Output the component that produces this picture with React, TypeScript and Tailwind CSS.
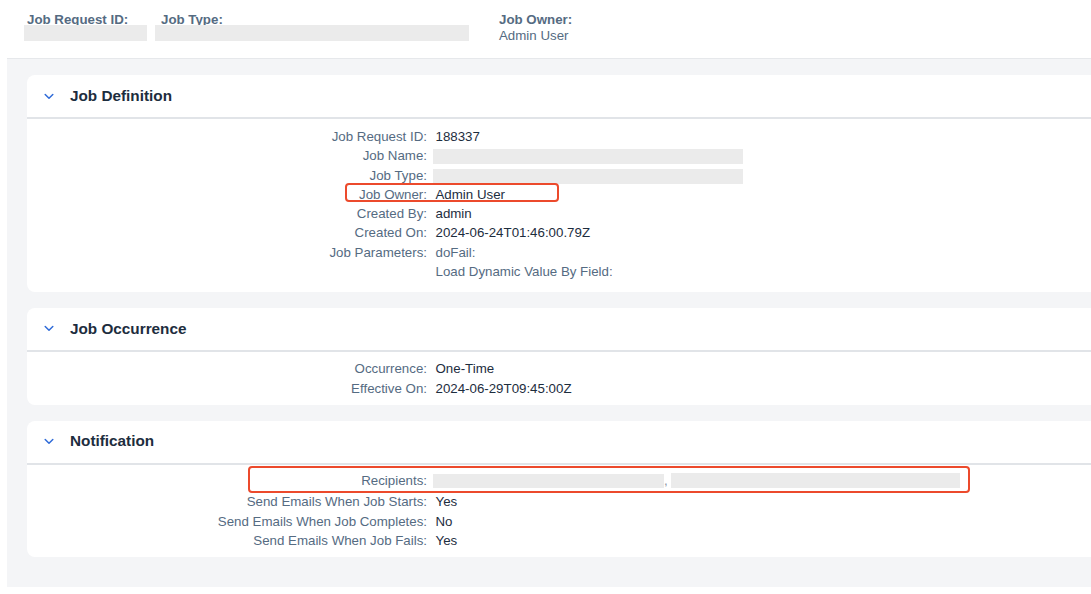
import React from "react";

const LABEL = "text-[#556b82]";
const VALUE = "text-[#1d2d3e]";

function Chevron() {
  return (
    <svg width="10" height="7" viewBox="0 0 10 7" className="shrink-0">
      <path d="M1.2 1.5 L5 5.2 L8.8 1.5" fill="none" stroke="#2f6bd8" strokeWidth="1.5" strokeLinecap="round" strokeLinejoin="round" />
    </svg>
  );
}

function Bar({ w, h = 15 }: { w: number; h?: number }) {
  return <span className="inline-block bg-[#ebebeb] align-middle" style={{ width: w, height: h }} />;
}

function Row({ label, children, labelOnly }: { label: string; children?: React.ReactNode; labelOnly?: boolean }) {
  return (
    <div className="flex h-[19.3px] items-center leading-[19.3px]">
      <div className={`w-[400px] shrink-0 text-right ${LABEL}`}>{label}</div>
      <div className={`pl-[8.5px] flex items-center ${labelOnly ? LABEL : VALUE}`}>{children}</div>
    </div>
  );
}

function CardHeader({ title }: { title: string }) {
  return (
    <div className="h-[44px] flex items-center border-b-2 border-[#e1e4e8]">
      <div className="pl-[17px] w-[43px]">
        <Chevron />
      </div>
      <div className="text-[15.3px] font-bold text-[#1d2d3e]">{title}</div>
    </div>
  );
}

export default function App() {
  return (
    <div className="w-[1091px] h-[594px] overflow-hidden bg-white text-[13.3px] font-['Liberation_Sans',Arial,sans-serif]">
      <header className="h-[58px] flex pl-[27px] pt-[12px]">
        <div className="w-[134px] flex flex-col">
          <div className={`font-bold leading-[16px] ${LABEL}`}>Job Request ID:</div>
          <div className="-mt-[3px] -ml-[3px]">
            <span className="block bg-[#ebebeb] w-[123px] h-[16px]" />
          </div>
        </div>
        <div className="w-[338px] flex flex-col">
          <div className={`font-bold leading-[16px] ${LABEL}`}>Job Type:</div>
          <div className="-mt-[3px] -ml-[6px]">
            <span className="block bg-[#ebebeb] w-[314px] h-[16px]" />
          </div>
        </div>
        <div className="flex flex-col">
          <div className={`font-bold leading-[16px] ${LABEL}`}>Job Owner:</div>
          <div className={`leading-[15px] ${LABEL}`}>Admin User</div>
        </div>
      </header>

      <main className="ml-[7px] h-[529px] bg-[#f4f5f7] border-t border-[#e6e8eb] pt-[16px] pl-[20px] flex flex-col gap-[16px]">
        {/* Job Definition */}
        <section className="relative w-[1100px] bg-white rounded-[8px]">
          <CardHeader title="Job Definition" />
          <div className="pt-[8px] pb-[10.6px]">
            <Row label="Job Request ID:">188337</Row>
            <Row label="Job Name:">
              <span className="-ml-[2.5px]"><Bar w={310} /></span>
            </Row>
            <Row label="Job Type:">
              <span className="-ml-[2.5px]"><Bar w={310} /></span>
            </Row>
            <Row label="Job Owner:">Admin User</Row>
            <Row label="Created By:">admin</Row>
            <Row label="Created On:">2024-06-24T01:46:00.79Z</Row>
            <Row label="Job Parameters:" labelOnly>doFail:</Row>
            <Row label="" labelOnly>Load Dynamic Value By Field:</Row>
          </div>
          <div className="absolute left-[317.5px] top-[108.3px] w-[214px] h-[18.7px] border-2 border-[#ec4a2c] rounded-[4px]" />
        </section>

        {/* Job Occurrence */}
        <section className="relative w-[1100px] bg-white rounded-[8px]">
          <CardHeader title="Job Occurrence" />
          <div className="pt-[7.3px] pb-[7px]">
            <Row label="Occurrence:">One-Time</Row>
            <Row label="Effective On:">2024-06-29T09:45:00Z</Row>
          </div>
        </section>

        {/* Notification */}
        <section className="relative w-[1100px] bg-white rounded-[8px]">
          <CardHeader title="Notification" />
          <div className="pb-[7px]">
            <div className="flex h-[27.4px] items-center pt-[4px]">
              <div className={`w-[400px] shrink-0 text-right ${LABEL}`}>Recipients:</div>
              <div className={`pl-[6px] flex items-center ${VALUE}`}>
                <Bar w={231} h={14} />
                <span className="w-[7px] text-[#8a96a3] leading-none">,</span>
                <Bar w={289} h={15} />
              </div>
            </div>
            <Row label="Send Emails When Job Starts:">Yes</Row>
            <Row label="Send Emails When Job Completes:">No</Row>
            <Row label="Send Emails When Job Fails:">Yes</Row>
          </div>
          <div className="absolute left-[221px] top-[45px] w-[722px] h-[27.5px] border-2 border-[#ec4a2c] rounded-[4px]" />
        </section>
      </main>
    </div>
  );
}
